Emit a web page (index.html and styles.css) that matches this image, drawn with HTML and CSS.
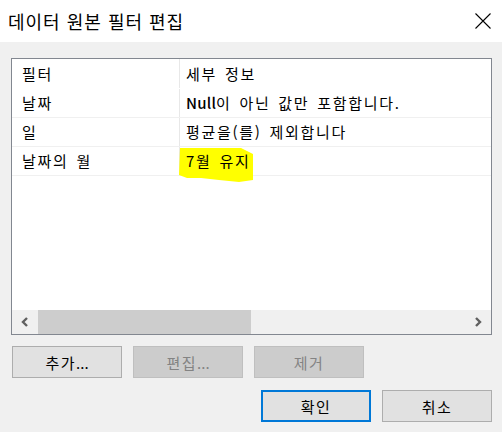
FILE: index.html
```html
<!DOCTYPE html>
<html lang="ko">
<head>
<meta charset="utf-8">
<link rel="stylesheet" href="styles.css">
</head>
<body>
<div class="dialog">
  <div class="titlebar">
    <span class="title">데이터 원본 필터 편집</span>
    <svg class="close" width="16" height="16" viewBox="0 0 16 16"><path d="M0.5 0.5L15.5 15.5M15.5 0.5L0.5 15.5" stroke="#000" stroke-width="1.1" fill="none"/></svg>
  </div>
  <div class="body">
    <div class="listbox">
      <div class="grid">
        <div class="row head"><div class="c1">필터</div><div class="c2">세부 정보</div></div>
        <div class="row"><div class="c1">날짜</div><div class="c2"><span class="latin">Null</span>이 아닌 값만 포함합니다.</div></div>
        <div class="row"><div class="c1">일</div><div class="c2">평균을(를) 제외합니다</div></div>
        <div class="row"><div class="c1">날짜의 월</div><div class="c2 hl">
          <svg class="marker" width="80" height="40" viewBox="0 0 80 40"><path d="M1 1 L62 1 L68 4 L74 7 L74 33 L60 35 L40 33 L22 31 L8 31 L0 28 Z" fill="#ffff00"/></svg>
          <span class="hltext">7월 유지</span></div></div>
      </div>
      <div class="hscroll">
        <div class="arrow"><svg width="10" height="10" viewBox="0 0 10 10"><path d="M7 1 L3 5 L7 9" stroke="#606060" stroke-width="2.4" fill="none"/></svg></div>
        <div class="track"><div class="thumb"></div></div>
        <div class="arrow"><svg width="10" height="10" viewBox="0 0 10 10"><path d="M3 1 L7 5 L3 9" stroke="#606060" stroke-width="2.4" fill="none"/></svg></div>
      </div>
    </div>
    <div class="btnrow">
      <button class="btn">추가<span class="dots">...</span></button>
      <button class="btn disabled">편집<span class="dots">...</span></button>
      <button class="btn disabled">제거</button>
    </div>
    <div class="btnrow right">
      <button class="btn primary">확인</button>
      <button class="btn">취소</button>
    </div>
  </div>
</div>
</body>
</html>
```

FILE: styles.css
```css
* { box-sizing: border-box; }
html, body { margin: 0; padding: 0; }
body {
  width: 502px;
  height: 432px;
  background: #f0f0f0;
  font-family: "Noto Sans CJK KR", "Noto Sans", sans-serif;
  color: #000;
  overflow: hidden;
}
.dialog { width: 502px; height: 432px; display: flex; flex-direction: column; }
.titlebar {
  height: 42px;
  background: #fff;
  display: flex;
  align-items: center;
  justify-content: space-between;
  padding: 0 11px 0 8px;
}
.title { font-size: 18px; line-height: 22px; letter-spacing: 1px; }
.body { padding: 16px 10px 0 11px; }
.listbox {
  width: 481px;
  height: 277px;
  border: 1px solid #828790;
  background: #fff;
  display: flex;
  flex-direction: column;
}
.grid { flex: 1; display: flex; flex-direction: column; }
.row {
  display: flex;
  height: 29px;
  border-bottom: 1px solid #f0f0f0;
  font-size: 15px;
  line-height: 28px;
  letter-spacing: 1.7px;
  word-spacing: 2px;
  white-space: nowrap;
}
.row.head { height: 30px; border-bottom: 1px solid #fff; line-height: 30px; }
.latin { letter-spacing: 0.2px; font-weight: 500; }
.c1 { width: 168px; padding-left: 10px; border-right: 1px solid #e8e8e8; }
.c2 { flex: 1; padding-left: 6px; position: relative; }
.marker { position: absolute; left: -1px; top: 0px; }
.hltext { position: relative; }
.hscroll { height: 24px; display: flex; background: #f0f0f0; }
.arrow { width: 26px; display: flex; align-items: center; justify-content: center; }
.track { flex: 1; display: flex; }
.thumb { width: 213px; background: #cdcdcd; }
.btnrow { display: flex; gap: 11px; margin-top: 11px; padding-left: 1px; }
.btnrow.right { justify-content: flex-end; padding-left: 0; margin-top: 12px; }
.btn {
  width: 110px;
  height: 32px;
  border: 1px solid #adadad;
  background: #e1e1e1;
  font-family: "Noto Sans CJK KR", "Noto Sans", sans-serif;
  font-size: 15px;
  letter-spacing: 1.5px;
  color: #000;
  padding: 0;
  margin: 0;
}
.dots { letter-spacing: 0; }
.btn.disabled { background: #cccccc; border-color: #bfbfbf; color: #838383; }
.btn.primary { border: 2px solid #0078d7; }
```
